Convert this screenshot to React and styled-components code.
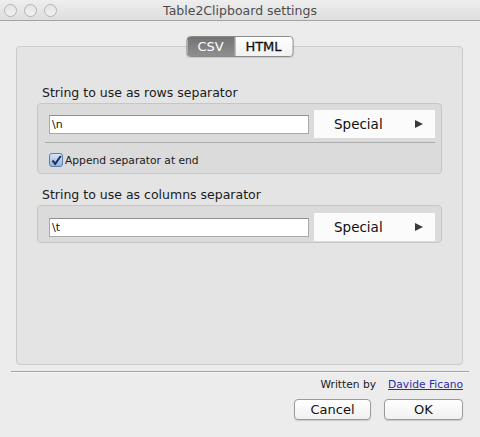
import React from "react";
import styled, { createGlobalStyle } from "styled-components";

const Global = createGlobalStyle`
  html, body { margin: 0; padding: 0; background: #ececec; }
  body { font-family: "DejaVu Sans", "Lucida Grande", sans-serif; color: #1a1a1a; }
  * { box-sizing: border-box; }
`;

const Window = styled.div`
  width: 480px;
  height: 437px;
  background: #ececec;
  overflow: hidden;
  display: flex;
  flex-direction: column;
`;

const TitleBar = styled.div`
  height: 21px;
  flex: none;
  display: flex;
  align-items: center;
  position: relative;
  background: linear-gradient(#eeeeee, #dedede);
  border-bottom: 1px solid #a3a3a3;
`;

const Lights = styled.div`
  display: flex;
  gap: 7px;
  padding-left: 4px;
`;

const Light = styled.span`
  width: 13px;
  height: 13px;
  border-radius: 50%;
  border: 1px solid #b4b4b4;
  background: linear-gradient(#e4e4e4, #f2f2f2);
`;

const Title = styled.div`
  position: absolute;
  left: 0;
  right: 0;
  text-align: center;
  font-size: 12.5px;
  color: #4d4d4d;
  top: 3px;
  line-height: 15px;
`;

const Panel = styled.div`
  position: relative;
  margin: 25px 17px 0 16px;
  height: 319px;
  flex: none;
  background: #e4e4e4;
  border: 1px solid #cbcbcb;
  border-radius: 4px;
  padding: 38px 20px 0 20px;
`;

const Tabs = styled.div`
  position: absolute;
  top: -11px;
  left: 50%;
  transform: translateX(-50%);
  display: flex;
  height: 21px;
  border: 1px solid #8a8a8a;
  border-radius: 4px;
  overflow: hidden;
  box-shadow: 0 1px 1px rgba(0,0,0,0.12);
`;

const Tab = styled.div`
  width: ${(p) => p.$w}px;
  display: flex;
  align-items: center;
  justify-content: center;
  font-size: 13px;
  color: ${(p) => (p.$active ? "#ffffff" : "#111111")};
  background: ${(p) =>
    p.$active ? "linear-gradient(#737373, #8f8f8f)" : "linear-gradient(#ffffff, #f1f1f1)"};
  border-left: ${(p) => (p.$first ? "none" : "1px solid #8a8a8a")};
  -webkit-text-stroke: ${(p) => (p.$active ? "0" : "0.3px #111")};
`;

const Label = styled.div`
  font-size: 12.5px;
  line-height: 16px;
  margin: ${(p) => p.$top || 0}px 0 2px 5px;
  color: #1a1a1a;
`;

const Group = styled.div`
  background: #dbdbdb;
  border: 1px solid #c6c6c6;
  border-radius: 4px;
`;

const Row = styled.div`
  display: flex;
  align-items: center;
  gap: 5px;
  padding: ${(p) => p.$pt}px 6px ${(p) => p.$pb}px 11px;
`;

const Field = styled.div`
  width: 260px;
  height: 19px;
  background: #ffffff;
  border: 1px solid #a9a9a9;
  border-top-color: #8f8f8f;
  font-size: 11px;
  line-height: 17px;
  padding-left: 2px;
  color: #111;
`;

const Special = styled.div`
  width: 121px;
  height: 28px;
  background: #fbfbfb;
  display: flex;
  align-items: center;
  font-size: 13.5px;
  color: #111;
  padding-left: 20px;
`;

const SpecialText = styled.span`
  flex: 1;
`;

const Arrow = styled.span`
  width: 0;
  height: 0;
  border-top: 4.5px solid transparent;
  border-bottom: 4.5px solid transparent;
  border-left: 8px solid #3a3a3a;
  margin-right: 12px;
`;

const Divider = styled.div`
  height: 1px;
  background: #acacac;
  margin: 4px 6px 0 7px;
`;

const CheckRow = styled.label`
  display: flex;
  align-items: center;
  gap: 2px;
  padding: 10px 0 6px 11px;
  font-size: 10.7px;
  line-height: 13px;
  color: #1a1a1a;
`;

const Box = styled.span`
  width: 14px;
  height: 14px;
  border-radius: 3px;
  border: 1px solid #5d7ea8;
  background: linear-gradient(#d8e6f6, #8fb3de);
  display: flex;
  align-items: center;
  justify-content: center;
`;

const Footer = styled.div`
  display: flex;
  flex-direction: column;
  align-items: flex-end;
  padding: 0 17px 0 0;
`;

const Rule = styled.div`
  align-self: stretch;
  margin: 6px -6px 0 11px;
  height: 1px;
  background: #a2a2a2;
  border-bottom: 1px solid #f6f6f6;
  box-sizing: content-box;
`;

const Credits = styled.div`
  display: flex;
  gap: 12px;
  font-size: 10.7px;
  line-height: 14px;
  margin-top: 5px;
`;

const Link = styled.a`
  color: #2c2ca6;
  text-decoration: underline;
`;

const Buttons = styled.div`
  display: flex;
  gap: 13px;
  margin-top: 7px;
`;

const Button = styled.div`
  width: ${(p) => p.$w}px;
  height: 21px;
  border: 1px solid #9a9a9a;
  border-radius: 4px;
  background: linear-gradient(#ffffff, #f0f0f0);
  box-shadow: 0 1px 1px rgba(0,0,0,0.15);
  display: flex;
  align-items: center;
  justify-content: center;
  font-size: 13px;
  color: #111;
`;

function SeparatorRow({ value, pt, pb }) {
  return (
    <Row $pt={pt} $pb={pb}>
      <Field>{value}</Field>
      <Special>
        <SpecialText>Special</SpecialText>
        <Arrow />
      </Special>
    </Row>
  );
}

export default function App() {
  return (
    <>
      <Global />
      <Window>
        <TitleBar>
          <Lights>
            <Light />
            <Light />
            <Light />
          </Lights>
          <Title>Table2Clipboard settings</Title>
        </TitleBar>
        <Panel>
          <Tabs>
            <Tab $active $first $w={47}>CSV</Tab>
            <Tab $w={58}>HTML</Tab>
          </Tabs>
          <Label>String to use as rows separator</Label>
          <Group>
            <SeparatorRow value="\n" pt={6} pb={0} />
            <Divider />
            <CheckRow>
              <Box>
                <svg width="11" height="11" viewBox="0 0 11 11">
                  <path d="M1.5 5.5 L4.2 8.8 L9.8 1" fill="none" stroke="#1d2f55" strokeWidth="2" />
                </svg>
              </Box>
              Append separator at end
            </CheckRow>
          </Group>
          <Label $top={13}>String to use as columns separator</Label>
          <Group>
            <SeparatorRow value="\t" pt={7} pb={1} />
          </Group>
        </Panel>
        <Footer>
          <Rule />
          <Credits>
            <span>Written by</span>
            <Link href="#">Davide Ficano</Link>
          </Credits>
          <Buttons>
            <Button $w={77}>Cancel</Button>
            <Button $w={79}>OK</Button>
          </Buttons>
        </Footer>
      </Window>
    </>
  );
}
